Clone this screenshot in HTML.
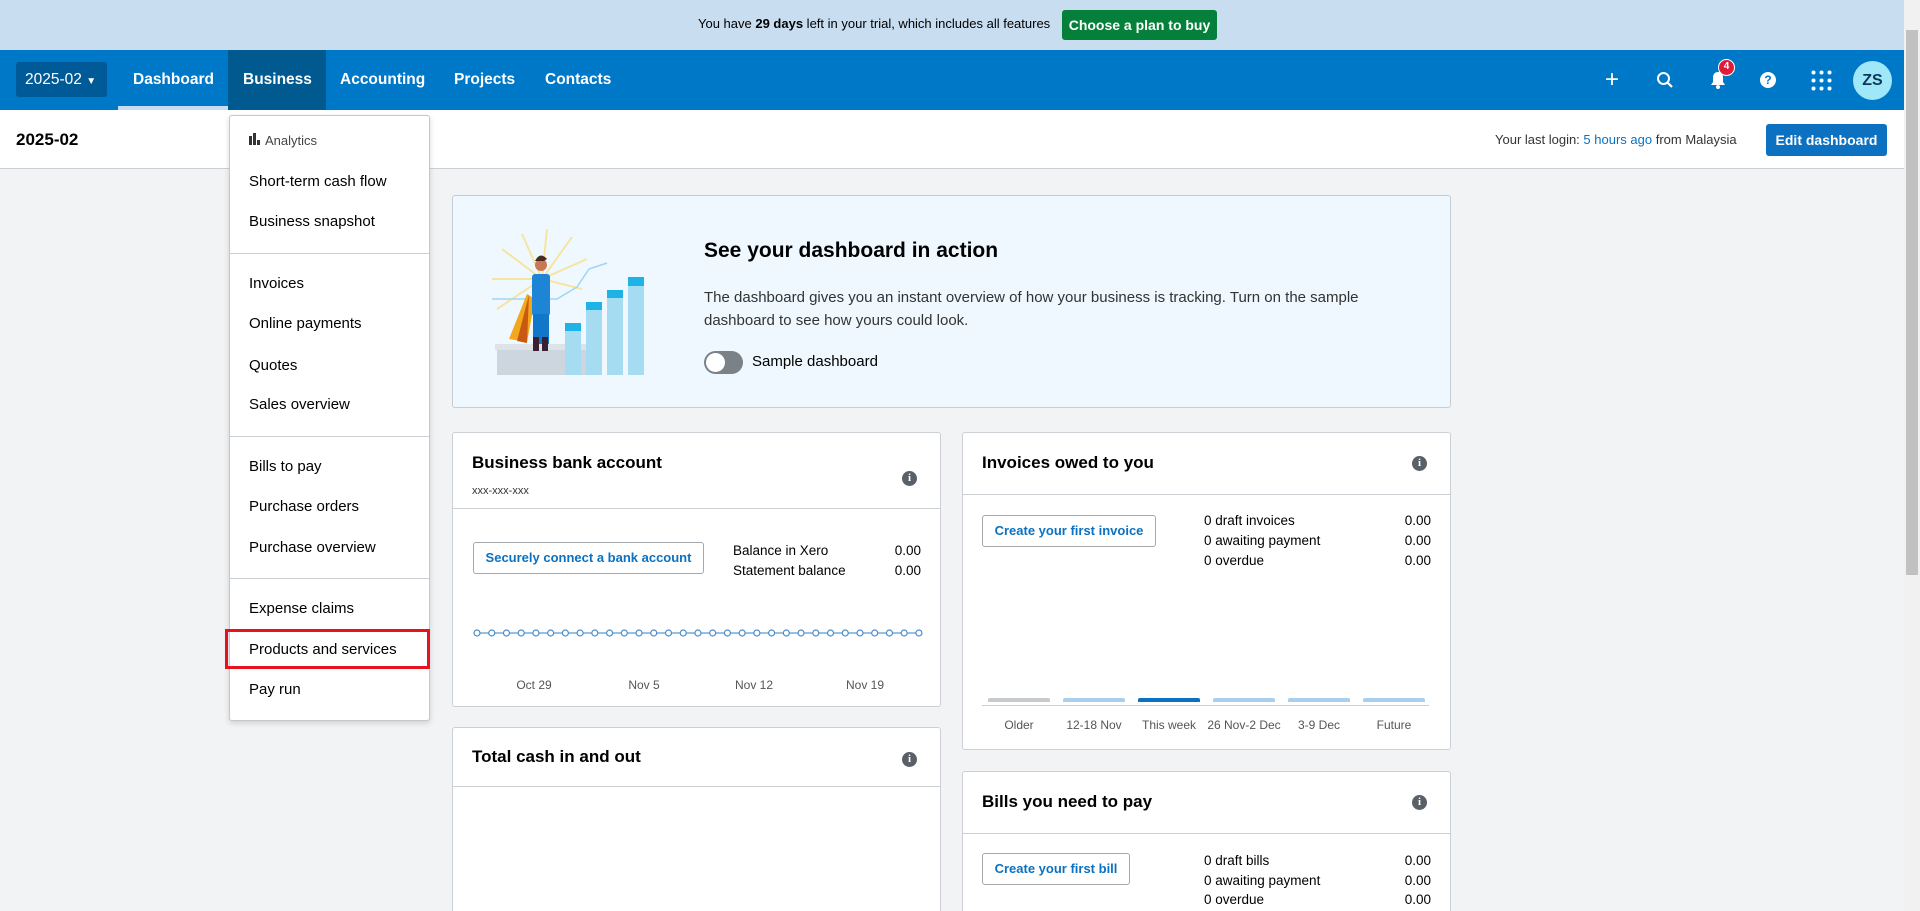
<!DOCTYPE html>
<html><head><meta charset="utf-8"><style>
*{box-sizing:border-box;margin:0;padding:0}
html,body{width:1920px;height:911px;overflow:hidden}
body{background:#f2f3f4;font-family:"Liberation Sans",Arial,sans-serif;color:#000}
#wrap{position:relative;width:1920px;height:911px;overflow:hidden}
.abs{position:absolute}
.banner{left:0;top:0;width:1904px;height:50px;background:#c8def0}
.nav{left:0;top:50px;width:1904px;height:60px;background:#0078c8}
.nav .t{position:absolute;top:0;height:60px;line-height:60px;color:#fff;font-weight:bold;font-size:15.5px}
.sub{left:0;top:110px;width:1904px;height:59px;background:#fff;border-bottom:1px solid #ccd0d4}
.card{position:absolute;background:#fff;border:1px solid #ccd0d4;border-radius:3px}
.ct{position:absolute;font-weight:bold;font-size:17px}
.info{position:absolute;width:15px;height:15px;border-radius:50%;background:#5a6068;color:#fff;font-size:11px;font-weight:bold;text-align:center;line-height:15px;font-family:"Liberation Serif",serif}
.hr{position:absolute;left:0;right:0;height:1px;background:#ccd0d4}
.btn{position:absolute;border:1px solid #a4a9ae;border-radius:3px;color:#0b71c0;font-weight:bold;font-size:13px;text-align:center;background:#fff}
.row{position:absolute;font-size:13.5px;color:#000}
.dd{left:229px;top:115px;width:201px;height:606px;background:#fff;border:1px solid #c3c8cc;border-radius:3px;box-shadow:0 2px 6px rgba(0,0,0,.15)}
.dd .i{position:absolute;left:19px;font-size:15px;color:#000}
.dd .d{position:absolute;left:0;right:0;height:1px;background:#ccd0d4}
.lbl{position:absolute;font-size:12px;color:#555;text-align:center}
</style></head><body><div id="wrap">
<div class="abs banner"></div>
<div class="abs" style="left:698px;top:16px;font-size:13px;color:#000">You have <b>29 days</b> left in your trial, which includes all features</div>
<div class="abs" style="left:1062px;top:10px;width:155px;height:30px;background:#05803b;border-radius:3px;color:#fff;font-weight:bold;font-size:14px;line-height:30px;text-align:center">Choose a plan to buy</div>

<div class="abs nav">
 <div class="abs" style="left:16px;top:12px;width:91px;height:35px;background:#005a97;border-radius:3px;color:#fff;font-size:15.5px;line-height:35px;padding-left:9px">2025-02 <span style="font-size:10px">▼</span></div>
 <div class="abs" style="left:118px;top:56px;width:110px;height:4px;background:#c8def0"></div>
 <div class="abs" style="left:228px;top:0;width:98px;height:60px;background:#005a8f"></div>
 <div class="t" style="left:133px">Dashboard</div>
 <div class="t" style="left:243px">Business</div>
 <div class="t" style="left:340px">Accounting</div>
 <div class="t" style="left:454px">Projects</div>
 <div class="t" style="left:545px">Contacts</div>
 <div class="t" style="left:1605px;font-size:24px;font-weight:normal">+</div>
 <svg class="abs" style="left:1656px;top:21px" width="18" height="18" viewBox="0 0 18 18"><circle cx="7.5" cy="7.5" r="5.5" fill="none" stroke="#fff" stroke-width="2"/><path d="M11.5 11.5L16 16" stroke="#fff" stroke-width="2.2"/></svg>
 <svg class="abs" style="left:1709px;top:20px" width="18" height="20" viewBox="0 0 18 20"><path d="M9 2c-3 0-5 2.3-5 5.5V12l-2 3h14l-2-3V7.5C14 4.3 12 2 9 2z" fill="#fff"/><circle cx="9" cy="17" r="2" fill="#fff"/></svg>
 <div class="abs" style="left:1718px;top:9px;width:17px;height:17px;border-radius:50%;background:#de1c3a;border:1.5px solid #fff;color:#fff;font-size:10px;font-weight:bold;text-align:center;line-height:14px">4</div>
 <div class="abs" style="left:1760px;top:22px;width:16px;height:16px;border-radius:50%;background:#fff;color:#0078c8;font-size:12px;font-weight:bold;text-align:center;line-height:16px">?</div>
 <svg class="abs" style="left:1811px;top:20px" width="21" height="21" viewBox="0 0 21 21" fill="#fff"><circle cx="2.5" cy="2.5" r="2"/><circle cx="10.5" cy="2.5" r="2"/><circle cx="18.5" cy="2.5" r="2"/><circle cx="2.5" cy="10.5" r="2"/><circle cx="10.5" cy="10.5" r="2"/><circle cx="18.5" cy="10.5" r="2"/><circle cx="2.5" cy="18.5" r="2"/><circle cx="10.5" cy="18.5" r="2"/><circle cx="18.5" cy="18.5" r="2"/></svg>
 <div class="abs" style="left:1853px;top:11px;width:39px;height:39px;border-radius:50%;background:#9fe7f9;color:#0b3a56;font-weight:bold;font-size:16px;text-align:center;line-height:39px">ZS</div>
</div>
<div class="abs" style="left:1904px;top:0;width:16px;height:911px;background:#f1f1f1"></div>
<div class="abs" style="left:1906px;top:30px;width:12px;height:545px;background:#c1c1c1"></div>

<div class="abs sub"></div>
<div class="abs" style="left:16px;top:130px;font-weight:bold;font-size:17px">2025-02</div>
<div class="abs" style="left:1495px;top:132px;font-size:13px;color:#333">Your last login: <span style="color:#0b71c0">5 hours ago</span> from Malaysia</div>
<div class="abs" style="left:1766px;top:124px;width:121px;height:32px;background:#0b71c0;border-radius:3px;color:#fff;font-weight:bold;font-size:14px;text-align:center;line-height:32px">Edit dashboard</div>

<div class="card" style="left:452px;top:195px;width:999px;height:213px;background:#eef8fe;border-color:#c5cdd4"></div>
<svg class="abs" style="left:487px;top:229px" width="160" height="146" viewBox="0 0 160 146">
 <g stroke="#f6e5a0" stroke-width="2"><path d="M55 50L5 50M55 50L15 20M55 50L35 5M55 50L60 0M55 50L85 8M55 50L100 30M55 50L95 60M55 50L10 80"/></g>
 <polyline points="5,70 70,70 90,58 102,40 120,34" fill="none" stroke="#9fd5f4" stroke-width="1.5"/>
 <rect x="10" y="120" width="102" height="26" fill="#cdd6df"/><rect x="8" y="115" width="106" height="6" fill="#dde3e8"/>
 <path d="M40 65L22 110 40 113 48 70z" fill="#f3a71c"/><path d="M42 66L30 112 40 114z" fill="#c85a10"/>
 <rect x="45" y="45" width="18" height="42" fill="#1d84d6" rx="3"/><rect x="46" y="85" width="16" height="30" fill="#1177c8"/>
 <circle cx="54" cy="36" r="6" fill="#c87954"/><path d="M48 32q5-10 12-2l-3 2z" fill="#4a2a20"/>
 <rect x="46" y="108" width="6" height="14" fill="#3a2030"/><rect x="55" y="108" width="6" height="14" fill="#3a2030"/>
 <rect x="78" y="101" width="16" height="45" fill="#a6dcf2"/><rect x="78" y="94" width="16" height="8" fill="#1fb2e6"/>
 <rect x="99" y="81" width="16" height="65" fill="#a6dcf2"/><rect x="99" y="73" width="16" height="8" fill="#1fb2e6"/>
 <rect x="120" y="69" width="16" height="77" fill="#a6dcf2"/><rect x="120" y="61" width="16" height="8" fill="#1fb2e6"/>
 <rect x="141" y="57" width="16" height="89" fill="#a6dcf2"/><rect x="141" y="48" width="16" height="9" fill="#1fb2e6"/>
</svg>
<div class="abs" style="left:704px;top:239px;font-weight:bold;font-size:21px">See your dashboard in action</div>
<div class="abs" style="left:704px;top:286px;width:700px;font-size:15px;color:#333;line-height:23px">The dashboard gives you an instant overview of how your business is tracking. Turn on the sample dashboard to see how yours could look.</div>
<div class="abs" style="left:704px;top:351px;width:39px;height:23px;border-radius:12px;background:#7a8288"></div>
<div class="abs" style="left:706px;top:353px;width:19px;height:19px;border-radius:50%;background:#fff"></div>
<div class="abs" style="left:752px;top:353px;font-size:15px">Sample dashboard</div>

<div class="card" style="left:452px;top:432px;width:489px;height:275px">
 <div class="ct" style="left:19px;top:20px">Business bank account</div>
 <div class="abs" style="left:19px;top:52px;font-size:11px;color:#333">xxx-xxx-xxx</div>
 <div class="info" style="left:449px;top:38px">i</div>
 <div class="hr" style="top:75px"></div>
 <div class="btn" style="left:20px;top:109px;width:231px;height:32px;line-height:30px">Securely connect a bank account</div>
 <div class="row" style="left:280px;top:110px">Balance in Xero</div><div class="row" style="right:19px;top:110px">0.00</div>
 <div class="row" style="left:280px;top:130px">Statement balance</div><div class="row" style="right:19px;top:130px">0.00</div>
 <svg class="abs" style="left:20px;top:194px" width="450" height="12" viewBox="0 0 450 12"><line x1="4" y1="6" x2="446" y2="6" stroke="#5b9bd5" stroke-width="1.2"/><g fill="#fff" stroke="#4a8cc8" stroke-width="1.2" id="dots"></g>
 <script>var g=document.getElementById('dots');for(var k=0;k<31;k++){var c=document.createElementNS('http://www.w3.org/2000/svg','circle');c.setAttribute('cx',4+k*14.73);c.setAttribute('cy',6);c.setAttribute('r',3);g.appendChild(c);}</script></svg>
 <div class="lbl" style="left:60px;top:245px;width:42px">Oct 29</div>
 <div class="lbl" style="left:170px;top:245px;width:42px">Nov 5</div>
 <div class="lbl" style="left:280px;top:245px;width:42px">Nov 12</div>
 <div class="lbl" style="left:391px;top:245px;width:42px">Nov 19</div>
</div>

<div class="card" style="left:452px;top:727px;width:489px;height:184px;border-bottom:none;border-radius:3px 3px 0 0">
 <div class="ct" style="left:19px;top:19px">Total cash in and out</div>
 <div class="info" style="left:449px;top:24px">i</div>
 <div class="hr" style="top:58px"></div>
</div>

<div class="card" style="left:962px;top:432px;width:489px;height:318px">
 <div class="ct" style="left:19px;top:20px">Invoices owed to you</div>
 <div class="info" style="left:449px;top:23px">i</div>
 <div class="hr" style="top:61px"></div>
 <div class="btn" style="left:19px;top:82px;width:174px;height:32px;line-height:30px">Create your first invoice</div>
 <div class="row" style="left:241px;top:80px">0 draft invoices</div><div class="row" style="right:19px;top:80px">0.00</div>
 <div class="row" style="left:241px;top:100px">0 awaiting payment</div><div class="row" style="right:19px;top:100px">0.00</div>
 <div class="row" style="left:241px;top:120px">0 overdue</div><div class="row" style="right:19px;top:120px">0.00</div>
 <div class="abs" style="left:19px;top:272px;width:447px;height:1px;background:#ccd0d4"></div>
 <div class="abs" style="left:25px;top:265px;width:62px;height:4px;background:#c8cbce;border-radius:2px 2px 0 0"></div>
 <div class="abs" style="left:100px;top:265px;width:62px;height:4px;background:#a8d0ee;border-radius:2px 2px 0 0"></div>
 <div class="abs" style="left:175px;top:265px;width:62px;height:4px;background:#0b71c0;border-radius:2px 2px 0 0"></div>
 <div class="abs" style="left:250px;top:265px;width:62px;height:4px;background:#a8d0ee;border-radius:2px 2px 0 0"></div>
 <div class="abs" style="left:325px;top:265px;width:62px;height:4px;background:#a8d0ee;border-radius:2px 2px 0 0"></div>
 <div class="abs" style="left:400px;top:265px;width:62px;height:4px;background:#a8d0ee;border-radius:2px 2px 0 0"></div>
 <div class="lbl" style="left:16px;top:285px;width:80px">Older</div>
 <div class="lbl" style="left:91px;top:285px;width:80px">12-18 Nov</div>
 <div class="lbl" style="left:166px;top:285px;width:80px">This week</div>
 <div class="lbl" style="left:241px;top:285px;width:80px">26 Nov-2 Dec</div>
 <div class="lbl" style="left:316px;top:285px;width:80px">3-9 Dec</div>
 <div class="lbl" style="left:391px;top:285px;width:80px">Future</div>
</div>

<div class="card" style="left:962px;top:771px;width:489px;height:140px;border-bottom:none;border-radius:3px 3px 0 0">
 <div class="ct" style="left:19px;top:20px">Bills you need to pay</div>
 <div class="info" style="left:449px;top:23px">i</div>
 <div class="hr" style="top:61px"></div>
 <div class="btn" style="left:19px;top:81px;width:148px;height:32px;line-height:30px">Create your first bill</div>
 <div class="row" style="left:241px;top:81px">0 draft bills</div><div class="row" style="right:19px;top:81px">0.00</div>
 <div class="row" style="left:241px;top:101px">0 awaiting payment</div><div class="row" style="right:19px;top:101px">0.00</div>
 <div class="row" style="left:241px;top:120px">0 overdue</div><div class="row" style="right:19px;top:120px">0.00</div>
</div>

<div class="abs dd">
 <svg class="abs" style="left:19px;top:17px" width="11" height="12" viewBox="0 0 11 12" fill="#333"><rect x="0" y="3" width="3" height="9"/><rect x="4" y="0" width="3" height="12"/><rect x="8" y="7" width="3" height="5"/></svg>
 <div class="abs" style="left:35px;top:17px;font-size:13px;color:#444">Analytics</div>
 <div class="i" style="top:57px">Short-term cash flow</div>
 <div class="i" style="top:97px">Business snapshot</div>
 <div class="d" style="top:137px"></div>
 <div class="i" style="top:159px">Invoices</div>
 <div class="i" style="top:199px">Online payments</div>
 <div class="i" style="top:241px">Quotes</div>
 <div class="i" style="top:280px">Sales overview</div>
 <div class="d" style="top:320px"></div>
 <div class="i" style="top:342px">Bills to pay</div>
 <div class="i" style="top:382px">Purchase orders</div>
 <div class="i" style="top:423px">Purchase overview</div>
 <div class="d" style="top:462px"></div>
 <div class="i" style="top:484px">Expense claims</div>
 <div class="i" style="top:525px">Products and services</div>
 <div class="i" style="top:565px">Pay run</div>
</div>
<div class="abs" style="left:225px;top:629px;width:205px;height:40px;border:3px solid #e8121e"></div>
</div></body></html>
